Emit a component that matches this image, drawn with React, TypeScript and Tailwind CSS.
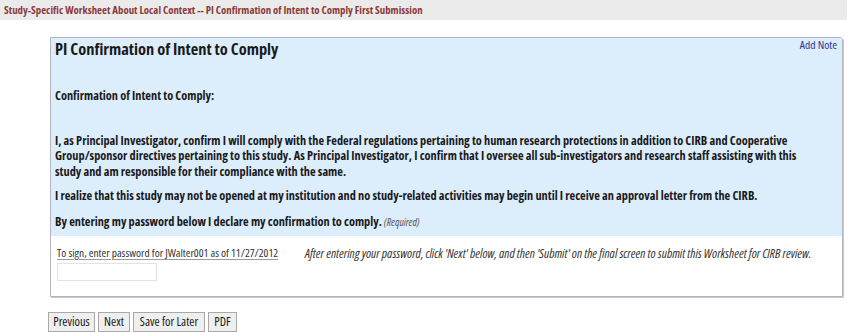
export default function App() {
  const buttons = [
    { label: 'Previous', w: 'w-[47px]' },
    { label: 'Next', w: 'w-[32px]' },
    { label: 'Save for Later', w: 'w-[72px]' },
    { label: 'PDF', w: 'w-[29px]' },
  ];

  return (
    <div className="w-[853px] h-[332px] bg-white font-['Open_Sans',sans-serif] [font-stretch:condensed] text-[#1a1a1a] overflow-hidden">
      {/* page heading */}
      <div className="w-[847px] h-[20px] bg-[#ebebeb] pl-[4px] flex items-center">
        <span className="text-[10.8px] font-bold text-[#8b3a3a] leading-none">
          Study-Specific Worksheet About Local Context -- PI Confirmation of Intent to Comply First Submission
        </span>
      </div>

      {/* worksheet panel */}
      <div className="ml-[50px] mt-[17px] w-[793px] border border-[#b3b3c2] rounded-tr-[3px] shadow-[1px_1px_0_#c9c9d2]">
        <div className="bg-[#dcedfc] pl-[4px] pr-[5px] pb-[6px]">
          <div className="flex justify-between items-start">
            <h1 className="mt-[1px] text-[16.4px] leading-[20px] font-bold">PI Confirmation of Intent to Comply</h1>
            <a className="text-[11.6px] leading-[14px] text-[#333399] cursor-pointer">Add Note</a>
          </div>

          <p className="mt-[29px] text-[12.3px] leading-[15.5px] font-bold">Confirmation of Intent to Comply:</p>

          <p className="mt-[29px] text-[12.3px] leading-[15.5px] font-bold">
            I, as Principal Investigator, confirm I will comply with the Federal regulations pertaining to human research protections in addition to CIRB and Cooperative
            <br />
            Group/sponsor directives pertaining to this study. As Principal Investigator, I confirm that I oversee all sub-investigators and research staff assisting with this
            <br />
            study and am responsible for their compliance with the same.
          </p>

          <p className="mt-[9px] text-[12.3px] leading-[15.5px] font-bold">
            I realize that this study may not be opened at my institution and no study-related activities may begin until I receive an approval letter from the CIRB.
          </p>

          <p className="mt-[10px] text-[12.3px] leading-[15.5px] font-bold">
            By entering my password below I declare my confirmation to comply.{' '}
            <span className="text-[10.5px] font-normal italic text-[#555]">(Required)</span>
          </p>
        </div>

        <div className="bg-white pl-[6px] pt-[10px] pb-[12px] flex">
          <div className="w-[248px]">
            <div className="text-[11.4px] leading-[14px] text-[#333] underline decoration-[#999] underline-offset-2">
              To sign, enter password for JWalter001 as of 11/27/2012
            </div>
            <input type="password" className="mt-[1px] w-[100px] h-[18px] border border-[#e2e2e2] outline-none" />
          </div>
          <div className="text-[12.7px] leading-[14px] italic text-[#333]">
            After entering your password, click 'Next' below, and then 'Submit' on the final screen to submit this Worksheet for CIRB review.
          </div>
        </div>
      </div>

      {/* navigation */}
      <div className="ml-[48px] mt-[15px] flex gap-[3px]">
        {buttons.map((b) => (
          <button
            key={b.label}
            className={`${b.w} h-[20px] bg-[#efefef] border border-[#a8a8a8] text-[12.4px] leading-none text-[#1a1a1a] flex items-center justify-center whitespace-nowrap`}
          >
            {b.label}
          </button>
        ))}
      </div>

      <div className="mt-[4px] w-[817px] h-[1px] bg-[#e3e3e3]" />
    </div>
  );
}
